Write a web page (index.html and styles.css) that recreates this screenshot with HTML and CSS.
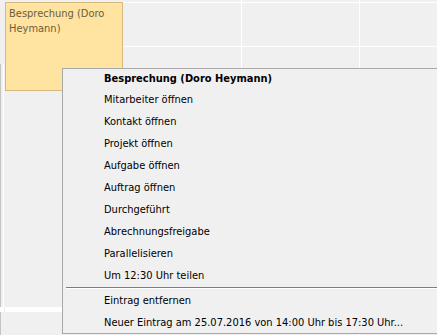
FILE: index.html
```html
<!DOCTYPE html>
<html lang="de">
<head>
  <meta charset="UTF-8">
  <meta name="viewport" content="width=device-width, initial-scale=1.0">
  <title>Kalender</title>
  <link rel="stylesheet" href="styles.css">
</head>
<body>
  <div class="calendar">
    <div class="gutter">
      <div class="gutter-cell"></div>
      <div class="day-break"></div>
      <div class="gutter-rest"></div>
    </div>
    <div class="day day-wide">
      <div class="slot slot-top"></div>
      <div class="slot"></div>
      <div class="slot"></div>
      <div class="slot-fill"></div>
      <div class="day-break"></div>
      <div class="appointment">Besprechung (Doro Heymann)</div>
    </div>
    <div class="day day-narrow">
      <div class="slot slot-top"></div>
      <div class="slot"></div>
      <div class="slot"></div>
    </div>
    <div class="day day-rest">
      <div class="slot slot-top"></div>
      <div class="slot"></div>
      <div class="slot"></div>
    </div>
  </div>

  <ul class="context-menu">
    <li class="menu-title">Besprechung (Doro Heymann)</li>
    <li>Mitarbeiter öffnen</li>
    <li>Kontakt öffnen</li>
    <li>Projekt öffnen</li>
    <li>Aufgabe öffnen</li>
    <li>Auftrag öffnen</li>
    <li>Durchgeführt</li>
    <li>Abrechnungsfreigabe</li>
    <li>Parallelisieren</li>
    <li>Um 12:30 Uhr teilen</li>
    <li class="separator"></li>
    <li>Eintrag entfernen</li>
    <li>Neuer Eintrag am 25.07.2016 von 14:00 Uhr bis 17:30 Uhr...</li>
  </ul>
</body>
</html>
```

FILE: styles.css
```css
body {
  margin: 0;
  width: 437px;
  height: 335px;
  overflow: hidden;
  background: #f0f0f0;
  font-family: "DejaVu Sans Condensed", "DejaVu Sans", sans-serif;
  font-stretch: condensed;
  font-size: 11px;
  color: #000000;
}

.calendar {
  display: flex;
  height: 335px;
}

.gutter {
  width: 4px;
  display: flex;
  flex-direction: column;
}

.gutter-cell {
  margin-top: 64px;
  height: 243px;
  border-left: 1px solid #c4c4c4;
  border-right: 1px solid #ffffff;
  width: 2px;
}

.gutter-rest {
  flex: 1;
  border-left: 1px solid #c4c4c4;
}

.day-break {
  height: 5px;
  background: #ffffff;
}

.day {
  position: relative;
  border-right: 1px solid #ffffff;
}

.day-wide {
  width: 236px;
  padding-left: 1px;
}

.day-narrow {
  width: 117px;
}

.day-rest {
  flex: 1;
  border-right: none;
}

.slot {
  border-bottom: 1px solid #ffffff;
  height: 43px;
}

.slot-top {
  height: 2px;
}

.slot-fill {
  height: 216px;
}

.appointment {
  position: absolute;
  left: 1px;
  top: 2px;
  width: 113px;
  height: 84px;
  padding: 3px 0 0 3px;
  background: #ffe3a0;
  border: 1px solid #d6b97c;
  color: #6c5d3e;
  line-height: 15px;
}

.context-menu {
  position: absolute;
  left: 62px;
  top: 68px;
  width: 390px;
  margin: 0;
  padding: 0 0 0 41px;
  list-style: none;
  background: #f0f0f0;
  border: 1px solid #a8a8a8;
  box-sizing: border-box;
  height: 266px;
}

.context-menu li {
  height: 22px;
  line-height: 22px;
  white-space: nowrap;
}

.context-menu .menu-title {
  font-weight: bold;
  height: 20px;
  line-height: 19px;
}

.context-menu .separator {
  height: 1px;
  margin: 0 0 1px -38px;
  background: #6a8294;
  border-bottom: 1px solid #ffffff;
}
```
